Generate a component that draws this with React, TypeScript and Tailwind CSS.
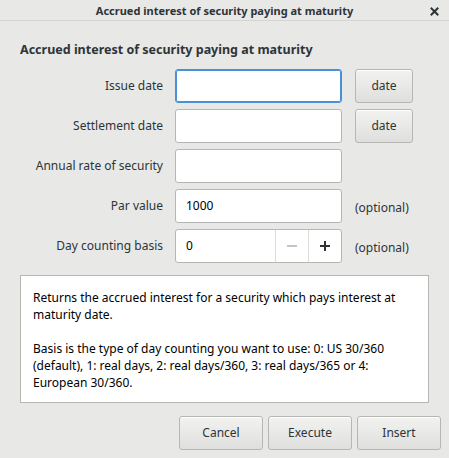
import React from "react";

const font = { fontFamily: '"Noto Sans", "DejaVu Sans", sans-serif' };

function Field({ focused, value }: { focused?: boolean; value?: string }) {
  return (
    <div
      className={`h-[34px] w-[167px] rounded-[3px] border bg-white px-[10px] flex items-center text-[12px] text-black ${
        focused ? "border-[#4a90d9] shadow-[inset_0_0_0_1px_#4a90d9]" : "border-[#b6b6b3]"
      }`}
    >
      {value}
    </div>
  );
}

function Btn({ children, w }: { children: React.ReactNode; w: string }) {
  return (
    <div
      className={`${w} h-[34px] rounded-[3px] border border-[#b6b6b3] bg-gradient-to-b from-[#f2f2f1] to-[#dfdfdd] flex items-center justify-center text-[12px] text-[#2e3436] shadow-[inset_0_1px_0_#ffffff]`}
    >
      {children}
    </div>
  );
}

export default function App() {
  const rows = [
    { label: "Issue date", focused: true, extra: "date" },
    { label: "Settlement date", extra: "date" },
    { label: "Annual rate of security" },
    { label: "Par value", value: "1000", extra: "opt" },
  ];
  return (
    <div
      className="w-[449px] h-[458px] bg-[#e8e8e7] text-[#2e3436] flex flex-col overflow-hidden"
      style={font}
    >
      <div className="h-[21px] border-b border-[#d4d4d2] bg-[#e8e8e7] relative flex items-center justify-center rounded-t-[6px]">
        <span className="text-[11px] font-bold leading-none">Accrued interest of security paying at maturity</span>
        <svg className="absolute right-[10px] top-[7px]" width="9" height="9" viewBox="0 0 9 9">
          <path d="M1.5 1.5L7.5 7.5M7.5 1.5L1.5 7.5" stroke="#2e3436" strokeWidth="2" strokeLinecap="square" />
        </svg>
      </div>
      <div className="px-[20px] pt-[20px] flex flex-col">
        <div className="text-[12.5px] font-bold leading-[17px]">Accrued interest of security paying at maturity</div>
        <div className="mt-[11px] grid grid-cols-[143px_167px_auto] gap-x-[12px] gap-y-[6px] items-center">
          {rows.map((r) => (
            <React.Fragment key={r.label}>
              <div className="text-right text-[12px]">{r.label}</div>
              <Field focused={r.focused} value={r.value} />
              <div className="pl-[1px]">
                {r.extra === "date" ? (
                  <Btn w="w-[58px]">date</Btn>
                ) : r.extra === "opt" ? (
                  <span className="text-[12px]">(optional)</span>
                ) : null}
              </div>
            </React.Fragment>
          ))}
          <div className="text-right text-[12px]">Day counting basis</div>
          <div className="h-[34px] w-[167px] rounded-[3px] border border-[#b6b6b3] bg-white flex text-[12px] text-black">
            <div className="flex-1 flex items-center px-[10px]">0</div>
            <div className="w-[33px] border-l border-[#dcdcda] flex items-center justify-center">
              <svg width="12" height="12" viewBox="0 0 12 12">
                <path d="M1 6H11" stroke="#c4c4c2" strokeWidth="2" />
              </svg>
            </div>
            <div className="w-[33px] border-l border-[#dcdcda] flex items-center justify-center">
              <svg width="12" height="12" viewBox="0 0 12 12">
                <path d="M1 6H11M6 1V11" stroke="#2e3436" strokeWidth="2" />
              </svg>
            </div>
          </div>
          <div className="pl-[1px]">
            <span className="text-[12px]">(optional)</span>
          </div>
        </div>
        <div className="mt-[12px] w-[409px] h-[128px] bg-white border border-[#b6b6b3] px-[12px] pt-[13px] text-[12px] leading-[17px] text-black">
          <p>Returns the accrued interest for a security which pays interest at maturity date.</p>
          <p className="mt-[17px]">
            Basis is the type of day counting you want to use: 0: US 30/360 (default), 1: real days, 2: real days/360, 3: real days/365 or 4: European 30/360.
          </p>
        </div>
        <div className="mt-[13px] flex justify-end gap-[5px] mr-[-12px]">
          <Btn w="w-[84px]">Cancel</Btn>
          <Btn w="w-[84px]">Execute</Btn>
          <Btn w="w-[84px]">Insert</Btn>
        </div>
      </div>
    </div>
  );
}
